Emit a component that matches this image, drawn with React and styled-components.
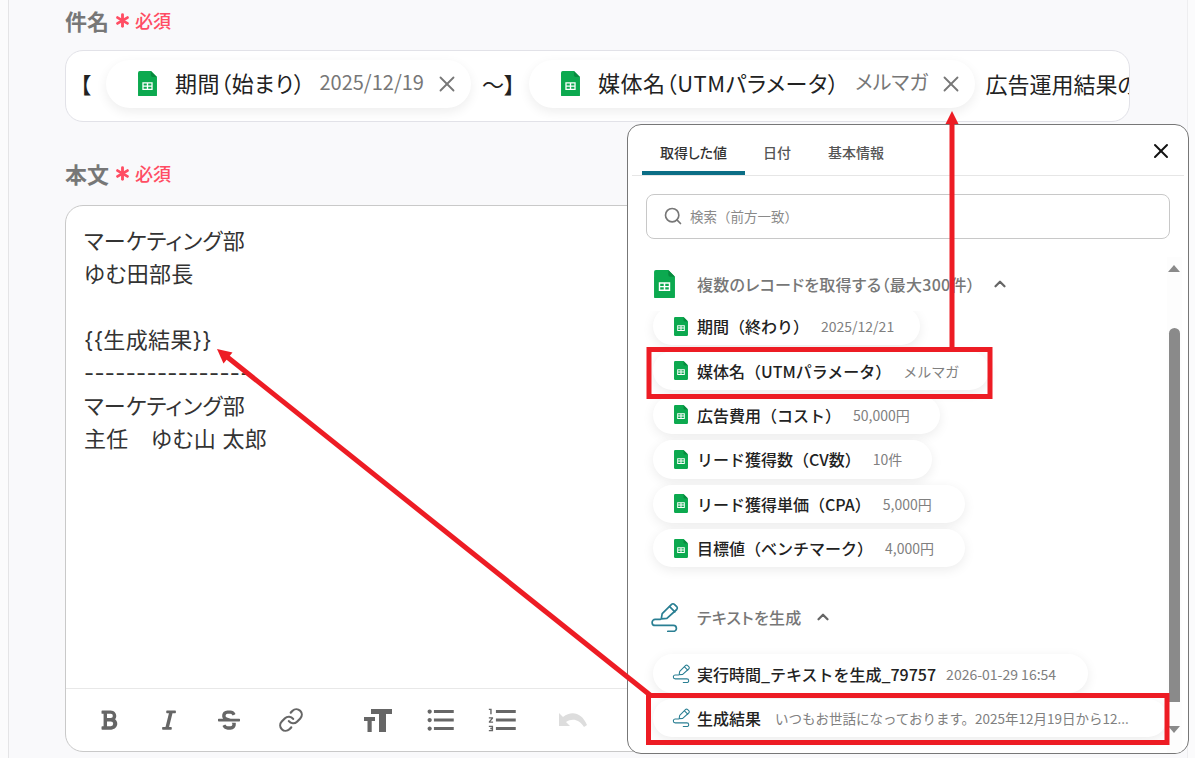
import React from 'react';
import styled, { createGlobalStyle } from 'styled-components';
import { FaBold, FaItalic, FaStrikethrough } from 'react-icons/fa';
import { MdFormatListBulleted, MdFormatListNumbered } from 'react-icons/md';
import { LuLink, LuSearch, LuX, LuChevronUp, LuAsterisk } from 'react-icons/lu';

const FONT = '"Noto Sans CJK JP", "Noto Sans", Roboto, sans-serif';

const GlobalStyle = createGlobalStyle`
  html, body { margin: 0; padding: 0; background: #fbfbfc; }
  body { font-family: ${FONT}; color: #222; font-feature-settings: "palt"; }
`;

const Screen = styled.div`
  position: relative;
  width: 1195px;
  height: 758px;
  overflow: hidden;
  background: #fbfbfc;
`;

const FormSheet = styled.div`
  box-sizing: border-box;
  width: 1180px;
  height: 758px;
  margin-left: 8px;
  padding: 8px 57px 0 56px;
  background: #f9f9fb;
  border-left: 1px solid #e4e4e6;
  border-right: 1px solid #eeeef0;
  display: flex;
  flex-direction: column;
`;

const FieldLabel = styled.div`
  box-sizing: border-box;
  height: 28px;
  padding-bottom: 3px;
  display: flex;
  align-items: center;
  gap: 2px;
  font-size: 22px;
  font-weight: 700;
  color: #777;
  line-height: 23px;
`;

const Required = styled.span`
  display: flex;
  align-items: center;
  gap: 1px;
  color: #ff4d63;
  font-size: 18px;
  font-weight: 500;
`;

const Asterisk = styled(LuAsterisk)`
  width: 23px;
  height: 23px;
  stroke-width: 3;
`;

const SubjectBox = styled.div`
  box-sizing: border-box;
  height: 72px;
  margin: 14px 0 39px;
  padding: 0 0 0 14px;
  display: flex;
  align-items: center;
  gap: 9px;
  background: #fff;
  border: 1px solid #e2e2e8;
  border-radius: 18px;
  overflow: hidden;
  white-space: nowrap;
  font-size: 22px;
`;

const SubjectText = styled.span`
  flex: none;
  color: #222;
  padding-bottom: 6px;
  margin: 0 ${p => p.$mr || 0}px 0 ${p => p.$ml || 0}px;
`;

const TagPill = styled.div`
  flex: none;
  box-sizing: border-box;
  height: 48px;
  display: flex;
  align-items: center;
  padding: 0 11px 0 32px;
  margin-top: -5px;
  background: #fff;
  border-radius: 24px;
  box-shadow: 0 4px 12px rgba(0, 0, 0, 0.07);
`;

const TagName = styled.span`
  margin-left: 18px;
  padding-bottom: 4px;
  font-size: 22px;
  letter-spacing: 0.55px;
  color: #222;
`;

const TagValue = styled.span`
  margin-left: ${p => p.$gap || 14}px;
  padding-bottom: 4px;
  font-size: 20px;
  color: #777;
`;

const TagClose = styled(LuX)`
  margin-left: 10px;
  width: 26px;
  height: 26px;
  color: #777;
  stroke-width: 1.7;
`;

const BodyBox = styled.div`
  box-sizing: border-box;
  height: 547px;
  margin-top: 16px;
  display: flex;
  flex-direction: column;
  background: #fff;
  border: 1px solid #c9c9c9;
  border-radius: 18px;
`;

const BodyText = styled.div`
  flex: 1;
  padding: 19px 18px 0;
  font-family: Inter, ${FONT};
  font-size: 22px;
  line-height: 33px;
  letter-spacing: 0.3px;
  color: #333;
  white-space: pre;
`;

const Toolbar = styled.div`
  height: 62px;
  display: flex;
  align-items: center;
  border-top: 1px solid #e8e8e8;
  padding-left: 32px;
`;

const ToolButton = styled.span`
  width: ${p => p.$w}px;
  flex: none;
  display: flex;
  color: #666;
  font-size: ${p => p.$size || 22}px;
`;

const Panel = styled.div`
  position: absolute;
  left: 627px;
  top: 124px;
  box-sizing: border-box;
  width: 562px;
  height: 630px;
  display: flex;
  flex-direction: column;
  background: #fff;
  border: 1px solid #777;
  border-radius: 14px;
  overflow: hidden;
`;

const TabBar = styled.div`
  flex: none;
  position: relative;
  height: 50px;
  margin: 0 4px;
  display: flex;
  align-items: stretch;
  padding-left: 10px;
  border-bottom: 1px solid #e6e6e6;
`;

const Tab = styled.div`
  box-sizing: border-box;
  width: ${p => p.$w}px;
  display: flex;
  align-items: center;
  justify-content: center;
  font-size: 14px;
  font-weight: 500;
  color: ${p => (p.$active ? '#333' : '#555')};
  border-bottom: 4px solid ${p => (p.$active ? '#0b6e86' : 'transparent')};
  border-radius: 4px 4px 0 0;
  padding-top: 8px;
`;

const ClosePanel = styled(LuX)`
  position: absolute;
  right: 11px;
  top: 14px;
  width: 24px;
  height: 24px;
  color: #111;
  stroke-width: 2;
`;

const SearchBox = styled.div`
  flex: none;
  box-sizing: border-box;
  height: 45px;
  margin: 18px;
  display: flex;
  align-items: center;
  gap: 7px;
  padding-left: 16px;
  border: 1px solid #c8c8c8;
  border-radius: 8px;
  font-size: 13.5px;
  font-feature-settings: normal;
  line-height: 18px;
  padding-bottom: 1px;
  color: #8a8a8a;
`;

const SearchIcon = styled(LuSearch)`
  width: 20px;
  height: 20px;
  color: #777;
`;

const ScrollArea = styled.div`
  flex: 1;
  min-height: 0;
  display: flex;
`;

const ListColumn = styled.div`
  flex: 1;
  min-width: 0;
  overflow: hidden;
`;

const SectionHeader = styled.div`
  height: ${p => p.$h}px;
  margin-top: ${p => p.$top || 0}px;
  display: flex;
  align-items: center;
  padding-left: ${p => p.$pad}px;
  font-size: 16px;
  font-weight: 500;
  letter-spacing: 0.3px;
  color: #777;
`;

const SectionTitle = styled.span`
  margin-left: ${p => p.$gap}px;
`;

const SectionToggle = styled(LuChevronUp)`
  margin-left: ${p => p.$gap}px;
  width: 18px;
  height: 18px;
  color: #666;
  stroke-width: 3;
`;

const ChipClip = styled.div`
  overflow: hidden;
  padding: ${p => p.$top || 0}px 20px 18px 25px;
  display: flex;
  flex-direction: column;
  align-items: flex-start;
  gap: 6px;
`;

const Chip = styled.div`
  flex: none;
  box-sizing: border-box;
  height: 38.4px;
  width: ${p => p.$w}px;
  margin-top: ${p => p.$top || 0}px;
  display: flex;
  align-items: center;
  padding-left: ${p => p.$pad || 21}px;
  background: #fff;
  border-radius: 20px;
  box-shadow: 0 3px 12px rgba(0, 0, 0, 0.08);
  white-space: nowrap;
  overflow: hidden;
  font-feature-settings: normal;
`;

const ChipName = styled.span`
  margin-left: ${p => p.$gap || 9}px;
  font-size: 16px;
  font-weight: 500;
  color: #222;
`;

const ChipValue = styled.span`
  margin-left: ${p => p.$gap || 12}px;
  font-size: ${p => p.$size || 14}px;
  color: #808080;
`;

const Scrollbar = styled.div`
  flex: none;
  position: relative;
  width: 15px;
  margin-right: 6px;
  background: #fdfdfd;
`;

const ScrollThumb = styled.div`
  position: absolute;
  left: 2px;
  top: 71px;
  width: 11px;
  height: 374px;
  border-radius: 6px 6px 0 0;
  background: #8a8a8a;
`;

const ScrollArrow = styled.div`
  position: absolute;
  left: 1px;
  ${p => (p.$down ? 'bottom: 20px;' : 'top: 8px;')}
  width: 0;
  height: 0;
  border-left: 6.5px solid transparent;
  border-right: 6.5px solid transparent;
  ${p => (p.$down ? 'border-top: 7px solid #8a8a8a;' : 'border-bottom: 7px solid #8a8a8a;')}
`;

const Annotations = styled.svg`
  position: absolute;
  left: 0;
  top: 0;
  pointer-events: none;
`;

// Google Sheets mark
const SheetIcon = ({ size = 14 }) => (
  <svg width={size} height={size * 1.36} viewBox="0 0 22 30" style={{ flex: 'none' }}>
    <path d="M2 0h13l7 7v21a2 2 0 0 1-2 2H2a2 2 0 0 1-2-2V2a2 2 0 0 1 2-2z" fill="#0ca94f" />
    <path d="M15 0l7 7h-5a2 2 0 0 1-2-2z" fill="#078a3e" />
    <path d="M5 13h12v9H5z M6.500 14.500v2.200h3.700v-2.200z M11.800 14.500v2.200h3.700v-2.200z M6.500 18.200v2.300h3.700v-2.300z M11.800 18.200v2.300h3.700v-2.300z" fill="#fff" fillRule="evenodd" />
  </svg>
);

// pencil with a squiggle under it
const PencilIcon = ({ size = 19 }) => (
  <svg width={size} height={size} viewBox="0 0 30 32" fill="none" stroke="#2a7f93" strokeWidth="1.800" strokeLinecap="round" strokeLinejoin="round" style={{ flex: 'none' }}>
    <path d="M11 18l1-5.500L22 2.500a2.100 2.100 0 0 1 3 0l2.500 2.500a2.100 2.100 0 0 1 0 3L17 17.500z" />
    <path d="M20 5l5.500 5.500" />
    <path d="M10 18.500H4.500a3.100 3.100 0 0 0 0 6.500H24a3.100 3.100 0 0 1 0 6.300h-6" />
  </svg>
);

const SizeIcon = () => (
  <svg width="28" height="23" viewBox="0 0 28 23" fill="#666">
    <path d="M7 0h21v5h-6v18h-7V5H7z" />
    <path d="M0 8h11v4H7.700v11H3.500V12H0z" />
  </svg>
);

const UndoIcon = () => (
  <svg width="30" height="16" viewBox="0 0 30 16" fill="#ddd">
    <path d="M1 1v13h11L8 10c6-4 13-3 18 5l3-2C24 1 14-2 5 5z" />
  </svg>
);

const rows = [
  { name: '媒体名（UTMパラメータ）', value: 'メルマガ', w: 336 },
  { name: '広告費用（コスト）', value: '50,000円', w: 287 },
  { name: 'リード獲得数（CV数）', value: '10件', w: 279 },
  { name: 'リード獲得単価（CPA）', value: '5,000円', w: 312 },
  { name: '目標値（ベンチマーク）', value: '4,000円', w: 312 },
];

const App = () => (
  <Screen>
    <GlobalStyle />
    <FormSheet>
      <FieldLabel>
        件名
        <Required><Asterisk />必須</Required>
      </FieldLabel>
      <SubjectBox>
        <SubjectText $mr={6}>【</SubjectText>
        <TagPill>
          <SheetIcon size={19} />
          <TagName>期間（始まり）</TagName>
          <TagValue>2025/12/19</TagValue>
          <TagClose />
        </TagPill>
        <SubjectText $ml={2} $mr={5}>〜】</SubjectText>
        <TagPill>
          <SheetIcon size={19} />
          <TagName>媒体名（UTMパラメータ）</TagName>
          <TagValue $gap={16}>メルマガ</TagValue>
          <TagClose />
        </TagPill>
        <SubjectText $ml={1}>広告運用結果のご報告</SubjectText>
      </SubjectBox>
      <FieldLabel>
        本文
        <Required><Asterisk />必須</Required>
      </FieldLabel>
      <BodyBox>
        <BodyText>{`マーケティング部
ゆむ田部長

{{生成結果}}
----------------
マーケティング部
主任　ゆむ山 太郎`}</BodyText>
        <Toolbar>
          <ToolButton $w={60}><FaBold /></ToolButton>
          <ToolButton $w={60}><FaItalic /></ToolButton>
          <ToolButton $w={60}><FaStrikethrough /></ToolButton>
          <ToolButton $w={86} $size={26}><LuLink /></ToolButton>
          <ToolButton $w={60}><SizeIcon /></ToolButton>
          <ToolButton $w={62} $size={34}><MdFormatListBulleted /></ToolButton>
          <ToolButton $w={72} $size={34}><MdFormatListNumbered /></ToolButton>
          <ToolButton $w={40}><UndoIcon /></ToolButton>
        </Toolbar>
      </BodyBox>
    </FormSheet>

    <Panel>
      <TabBar>
        <Tab $w={103} $active>取得した値</Tab>
        <Tab $w={64}>日付</Tab>
        <Tab $w={94}>基本情報</Tab>
        <ClosePanel />
      </TabBar>
      <SearchBox>
        <SearchIcon />
        検索（前方一致）
      </SearchBox>
      <ScrollArea>
        <ListColumn>
          <SectionHeader $h={54} $pad={26}>
            <SheetIcon size={21} />
            <SectionTitle $gap={22}>複数のレコードを取得する（最大300件）</SectionTitle>
            <SectionToggle $gap={16} />
          </SectionHeader>
          <ChipClip>
            <Chip $w={267} $top={-4}>
              <SheetIcon />
              <ChipName>期間（終わり）</ChipName>
              <ChipValue>2025/12/21</ChipValue>
            </Chip>
            {rows.map(row => (
              <Chip key={row.name} $w={row.w}>
                <SheetIcon />
                <ChipName>{row.name}</ChipName>
                <ChipValue>{row.value}</ChipValue>
              </Chip>
            ))}
          </ChipClip>
          <SectionHeader $h={40} $pad={22} $top={12}>
            <PencilIcon size={30} />
            <SectionTitle $gap={17}>テキストを生成</SectionTitle>
            <SectionToggle $gap={12} />
          </SectionHeader>
          <ChipClip $top={17}>
            <Chip $w={435} $pad={19}>
              <PencilIcon />
              <ChipName $gap={6}>実行時間_テキストを生成_79757</ChipName>
              <ChipValue $gap={10}>2026-01-29 16:54</ChipValue>
            </Chip>
            <Chip $w={514} $pad={19}>
              <PencilIcon />
              <ChipName $gap={6}>生成結果</ChipName>
              <ChipValue $gap={14} $size={13.5}>いつもお世話になっております。2025年12月19日から12...</ChipValue>
            </Chip>
          </ChipClip>
        </ListColumn>
        <Scrollbar>
          <ScrollArrow />
          <ScrollThumb />
          <ScrollArrow $down />
        </Scrollbar>
      </ScrollArea>
    </Panel>

    <Annotations width="1195" height="758" viewBox="0 0 1195 758" fill="none">
      <rect x="649" y="349.500" width="341" height="47" stroke="#ed1c24" strokeWidth="5" />
      <rect x="648.500" y="695.500" width="518.500" height="47" stroke="#ed1c24" strokeWidth="5" />
      <path d="M952 347V120" stroke="#ed1c24" strokeWidth="5" />
      <path d="M952 111l-6.500 13h13z" fill="#ed1c24" />
      <path d="M650 695L226 356" stroke="#ed1c24" strokeWidth="5" />
      <path d="M217 349l15.500 3.500-9 11z" fill="#ed1c24" />
    </Annotations>
  </Screen>
);

export default App;
